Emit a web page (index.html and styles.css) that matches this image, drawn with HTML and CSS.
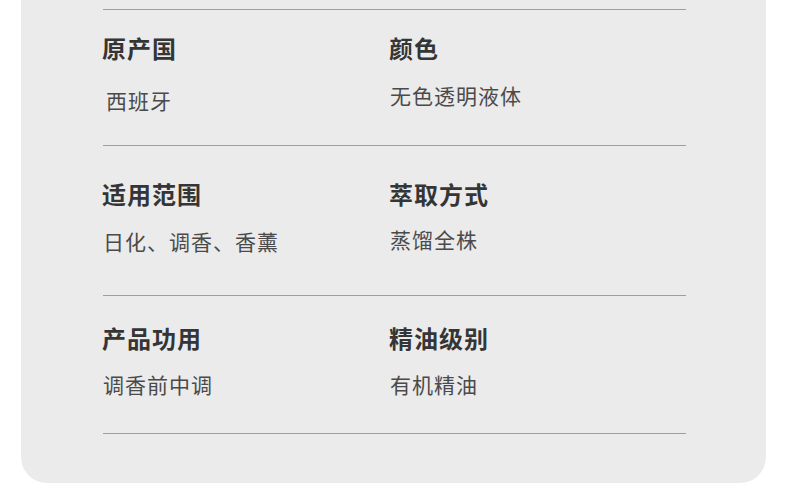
FILE: index.html
```html
<!DOCTYPE html>
<html lang="zh">
<head>
<meta charset="utf-8">
<link rel="stylesheet" href="styles.css">
</head>
<body>
<div class="card">
  <div class="spec spec-1">
    <div class="item">
      <div class="label">原产国</div>
      <div class="value shift">西班牙</div>
    </div>
    <div class="item">
      <div class="label">颜色</div>
      <div class="value up">无色透明液体</div>
    </div>
  </div>
  <div class="spec spec-2">
    <div class="item">
      <div class="label">适用范围</div>
      <div class="value">日化、调香、香薰</div>
    </div>
    <div class="item">
      <div class="label">萃取方式</div>
      <div class="value up">蒸馏全株</div>
    </div>
  </div>
  <div class="spec spec-3">
    <div class="item">
      <div class="label">产品功用</div>
      <div class="value">调香前中调</div>
    </div>
    <div class="item">
      <div class="label">精油级别</div>
      <div class="value">有机精油</div>
    </div>
  </div>
  <div class="rule"></div>
</div>
</body>
</html>
```

FILE: styles.css
```css
html, body {
  margin: 0;
  padding: 0;
  background: #ffffff;
}
body {
  font-family: "Noto Sans CJK SC", "Noto Sans", sans-serif;
  width: 788px;
  height: 498px;
  overflow: hidden;
}
.card {
  margin-left: 21px;
  width: 745px;
  height: 483px;
  background: #ebebeb;
  border-radius: 0 0 26px 26px;
  padding-top: 9px;
  box-sizing: border-box;
}
.spec {
  margin-left: 82px;
  width: 583px;
  border-top: 1px solid #9e9e9e;
  display: grid;
  grid-template-columns: 287px 1fr;
  box-sizing: border-box;
}
.spec-1 { padding-top: 23px; padding-bottom: 33px; }
.spec-2 { padding-top: 33px; padding-bottom: 39px; }
.spec-3 { padding-top: 27px; padding-bottom: 34px; }
.item {
  display: flex;
  flex-direction: column;
}
.spec-1 .item { gap: 19px; }
.spec-2 .item { gap: 17px; }
.spec-3 .item { gap: 16px; }
.label {
  font-size: 24px;
  line-height: 30px;
  font-weight: 700;
  color: #353535;
  letter-spacing: 1px;
  margin-left: -1px;
}
.value {
  font-size: 21px;
  line-height: 30px;
  font-weight: 400;
  color: #4a4a4a;
  letter-spacing: 1px;
}
.shift { padding-left: 3px; transform: translateY(3px); }
.up { transform: translateY(-2px); }
.rule {
  margin-left: 82px;
  width: 583px;
  border-top: 1px solid #9e9e9e;
}
```
